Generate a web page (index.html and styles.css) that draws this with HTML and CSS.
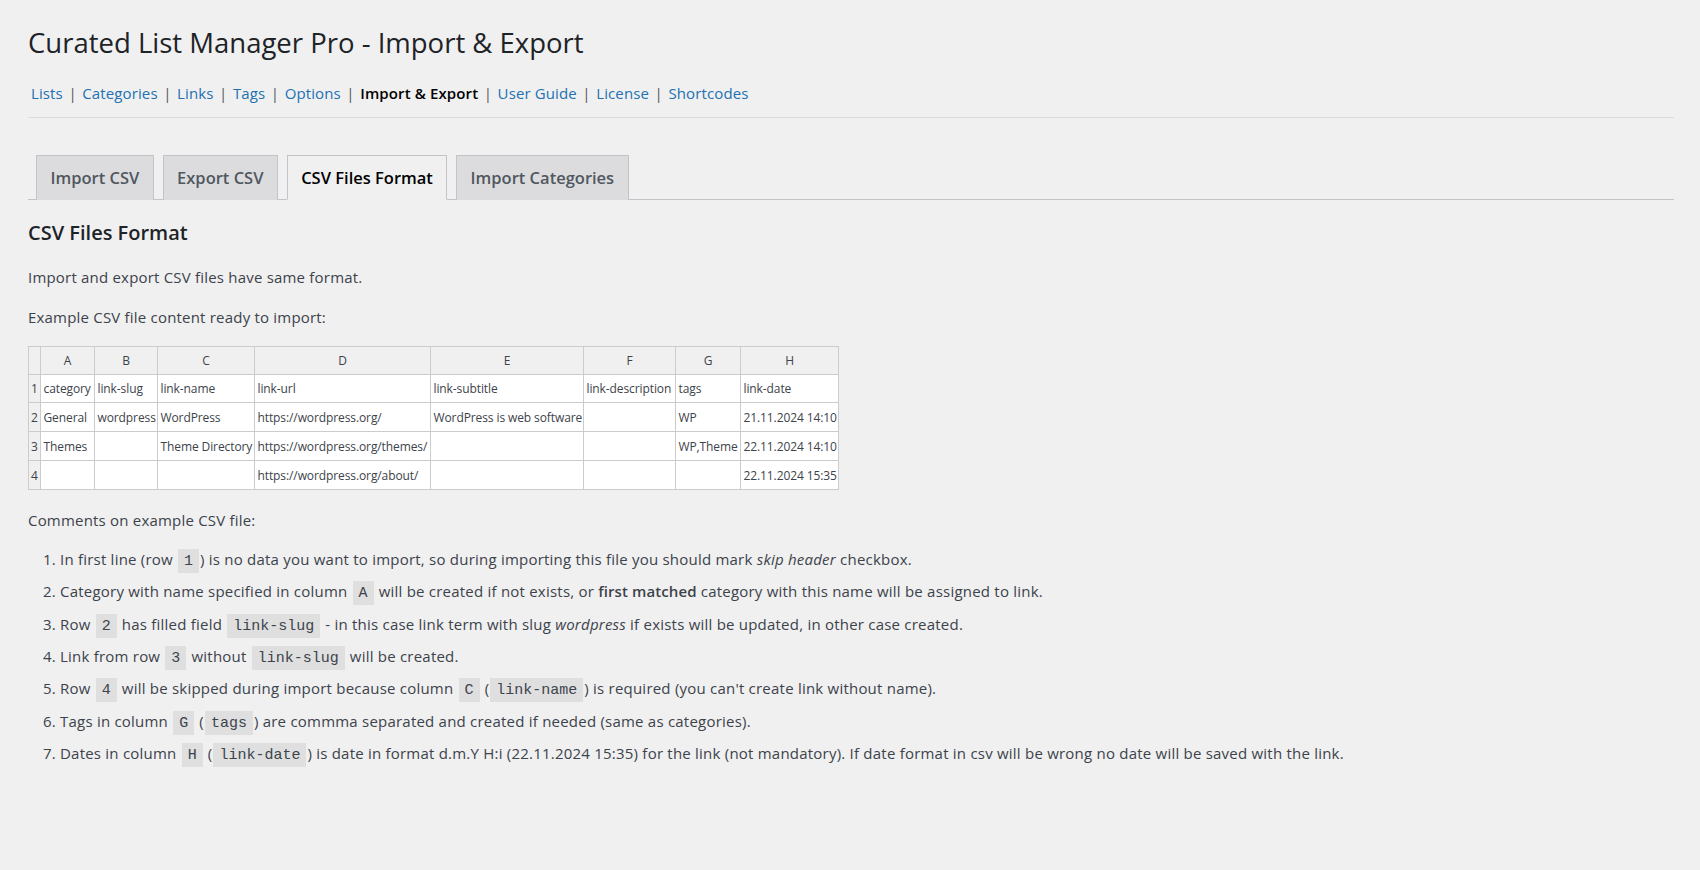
FILE: index.html
```html
<!DOCTYPE html>
<html lang="en">
<head>
<meta charset="utf-8">
<title>Curated List Manager Pro - Import &amp; Export</title>
<link rel="stylesheet" href="styles.css">
</head>
<body>
<div class="wrap">
  <h1 class="title">Curated List Manager Pro - Import &amp; Export</h1>
  <ul class="subnav">
    <li><a href="#">Lists</a><span class="sep">|</span></li>
    <li><a href="#">Categories</a><span class="sep">|</span></li>
    <li><a href="#">Links</a><span class="sep">|</span></li>
    <li><a href="#">Tags</a><span class="sep">|</span></li>
    <li><a href="#">Options</a><span class="sep">|</span></li>
    <li><a href="#" class="current">Import &amp; Export</a><span class="sep">|</span></li>
    <li><a href="#">User Guide</a><span class="sep">|</span></li>
    <li><a href="#">License</a><span class="sep">|</span></li>
    <li><a href="#">Shortcodes</a></li>
  </ul>
  <hr class="rule">
  <nav class="tabs">
    <a href="#" class="tab">Import CSV</a>
    <a href="#" class="tab">Export CSV</a>
    <a href="#" class="tab active">CSV Files Format</a>
    <a href="#" class="tab">Import Categories</a>
  </nav>
  <h2 class="section">CSV Files Format</h2>
  <p class="para first">Import and export CSV files have same format.</p>
  <p class="para second">Example CSV file content ready to import:</p>
  <table class="sheet">
    <colgroup>
      <col class="c0"><col class="c1"><col class="c2"><col class="c3"><col class="c4"><col class="c5"><col class="c6"><col class="c7"><col class="c8">
    </colgroup>
    <thead>
      <tr class="r28"><th class="idx"></th><th>A</th><th>B</th><th>C</th><th>D</th><th>E</th><th>F</th><th>G</th><th>H</th></tr>
    </thead>
    <tbody>
      <tr class="r28"><th class="idx">1</th><td>category</td><td>link-slug</td><td>link-name</td><td>link-url</td><td>link-subtitle</td><td>link-description</td><td>tags</td><td>link-date</td></tr>
      <tr class="r29"><th class="idx">2</th><td>General</td><td>wordpress</td><td>WordPress</td><td>https://wordpress.org/</td><td>WordPress is web software</td><td></td><td>WP</td><td>21.11.2024 14:10</td></tr>
      <tr class="r29"><th class="idx">3</th><td>Themes</td><td></td><td>Theme Directory</td><td>https://wordpress.org/themes/</td><td></td><td></td><td>WP,Theme</td><td>22.11.2024 14:10</td></tr>
      <tr class="r29"><th class="idx">4</th><td></td><td></td><td></td><td>https://wordpress.org/about/</td><td></td><td></td><td></td><td>22.11.2024 15:35</td></tr>
    </tbody>
  </table>
  <p class="para third">Comments on example CSV file:</p>
  <ol class="notes">
    <li>In first line (row <code>1</code>) is no data you want to import, so during importing this file you should mark <em>skip header</em> checkbox.</li>
    <li>Category with name specified in column <code>A</code> will be created if not exists, or <strong>first matched</strong> category with this name will be assigned to link.</li>
    <li>Row <code>2</code> has filled field <code>link-slug</code> - in this case link term with slug <em>wordpress</em> if exists will be updated, in other case created.</li>
    <li>Link from row <code>3</code> without <code>link-slug</code> will be created.</li>
    <li>Row <code>4</code> will be skipped during import because column <code>C</code> (<code>link-name</code>) is required (you can't create link without name).</li>
    <li>Tags in column <code>G</code> (<code>tags</code>) are commma separated and created if needed (same as categories).</li>
    <li>Dates in column <code>H</code> (<code>link-date</code>) is date in format d.m.Y H:i (22.11.2024 15:35) for the link (not mandatory). If date format in csv will be wrong no date will be saved with the link.</li>
  </ol>
</div>
</body>
</html>
```
FILE: styles.css
```css
* { box-sizing: border-box; }
html, body { margin: 0; padding: 0; }
body {
  background: #f0f0f1;
  color: #3c434a;
  font-family: "Open Sans", "Noto Sans", sans-serif;
  font-size: 15px;
  letter-spacing: .2px;
  height: 870px;
  overflow: hidden;
}
.wrap { padding: 0 26px 0 28px; }
.title {
  margin: 0;
  padding-top: 25px;
  height: 76px;
  font-size: 27.5px;
  line-height: 36px;
  font-weight: 400;
  color: #1d2327;
  letter-spacing: 0;
}
.subnav {
  list-style: none;
  margin: 0;
  padding: 0 0 0 3px;
  display: flex;
  height: 33px;
  align-items: center;
  letter-spacing: .12px;
}
.subnav a { color: #2271b1; text-decoration: none; }
.subnav a.current { color: #000; font-weight: 600; }
.sep { color: #50575e; margin: 0 5.5px; }
.rule { border: 0; border-top: 1px solid #dcdcde; margin: 8px 0 0; }
.tabs {
  display: flex;
  gap: 8.7px;
  padding-left: 8px;
  margin-top: 37px;
  border-bottom: 1px solid #c3c4c7;
  height: 45px;
}
.tab {
  height: 45px;
  padding: 0 13.5px;
  background: #dcdcde;
  border: 1px solid #c3c4c7;
  border-bottom: 0;
  color: #50575e;
  font-size: 16.5px;
  letter-spacing: 0;
  font-weight: 600;
  line-height: 43px;
  text-decoration: none;
  white-space: nowrap;
}
.tab.active {
  background: #f0f0f1;
  color: #000;
  border-bottom: 1px solid #f0f0f1;
}
.section {
  margin: 19px 0 0;
  font-size: 20px;
  line-height: 28px;
  font-weight: 600;
  letter-spacing: 0;
  color: #1d2327;
}
.para { margin: 0; line-height: 20px; }
.para.first { margin-top: 20px; }
.para.second { margin-top: 20px; }
.para.third { margin-top: 20px; }
.sheet {
  border-collapse: collapse;
  table-layout: fixed;
  width: 811px;
  margin-top: 19px;
  font-size: 12px;
  letter-spacing: -.1px;
  background: #fff;
}
.sheet th, .sheet td {
  border: 1px solid #ccc;
  padding: 0 0 0 2.5px;
  white-space: nowrap;
  font-weight: 400;
}
.sheet th { background: #f0f0f1; text-align: center; padding: 0 2px; }
.sheet td { text-align: left; }
.sheet .idx { padding: 0; }
.r28 { height: 28px; }
.r29 { height: 29px; }
.c0 { width: 12px; }
.c1 { width: 54px; }
.c2 { width: 63px; }
.c3 { width: 97px; }
.c4 { width: 176px; }
.c5 { width: 153px; }
.c6 { width: 92px; }
.c7 { width: 65px; }
.c8 { width: 98px; }
.notes { margin: 13px 0 0; padding: 0 0 0 32px; letter-spacing: .22px; }
.notes li { line-height: 32px; height: 32.33px; white-space: nowrap; }
.notes strong { font-weight: 600; letter-spacing: .1px; }
code {
  font-family: "Liberation Mono", "DejaVu Sans Mono", monospace;
  font-size: 15px;
  letter-spacing: 0;
  background: rgba(0,0,0,.07);
  padding: 4px 6px 3px;
  margin: 0 1px;
}
```
